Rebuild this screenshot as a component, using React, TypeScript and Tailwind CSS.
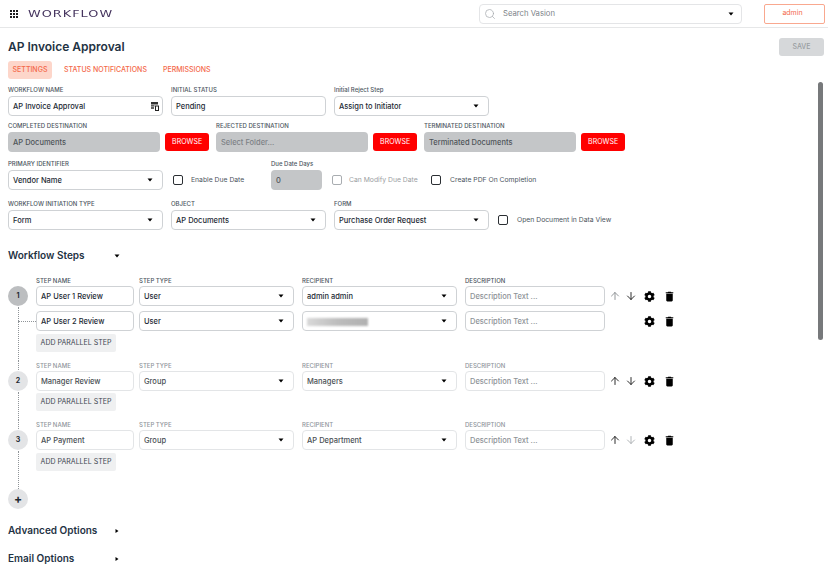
import { ArrowDown, ArrowUp, Search } from "lucide-react";
import { FaCog } from "react-icons/fa";
import { MdDelete } from "react-icons/md";

// ─── Small parts ────────────────────────────────────────────────────────────

function Caret({ right = false }: { right?: boolean }) {
  return (
    <svg width="6" height="6" viewBox="0 0 6 6" className="shrink-0 text-black" aria-hidden="true">
      <path d={right ? "M1.5 1L4.5 3L1.5 5Z" : "M0.5 1.5H5.5L3 4.5Z"} fill="currentColor" />
    </svg>
  );
}

function Label({ children, muted = false }: { children: React.ReactNode; muted?: boolean }) {
  return (
    <div className={`h-[10px] text-[6px] leading-[10px] font-medium whitespace-nowrap ${muted ? "text-[#8f959b]" : "text-[#4b5560]"}`}>
      {children}
    </div>
  );
}

function Box({
  children,
  select = false,
  muted = false,
  className = "",
}: {
  children?: React.ReactNode;
  select?: boolean;
  muted?: boolean;
  className?: string;
}) {
  return (
    <div
      className={`flex h-5 items-center justify-between rounded-[4px] border bg-white pl-[4px] pr-[9px] text-[7.5px] font-medium whitespace-nowrap ${
        muted ? "border-[#e3e5e7] text-[#4a4f55]" : "border-[#cfd2d5] text-[#1d2a35]"
      } ${className}`}
    >
      <span className="flex min-w-0 items-center pt-px">{children}</span>
      {select && <Caret />}
    </div>
  );
}

function Grey({ children, faint = false, w }: { children: string; faint?: boolean; w: string }) {
  return (
    <div
      className={`flex h-5 items-center rounded-[4px] bg-[#c4c6c8] pl-[5px] pt-px text-[7.5px] font-medium ${w} ${
        faint ? "text-[#7d8186]" : "text-[#4f5459]"
      }`}
    >
      {children}
    </div>
  );
}

function Browse() {
  return (
    <button className="ml-[5px] flex h-[18px] w-[44px] items-center justify-center rounded-[3px] bg-[#ff0000] text-[7px] text-white">
      BROWSE
    </button>
  );
}

function Check({ disabled = false }: { disabled?: boolean }) {
  return (
    <div className={`h-[10px] w-[10px] shrink-0 rounded-[2px] ${disabled ? "border border-[#a9adb1]" : "border-[1.5px] border-[#2b2f33]"}`} />
  );
}

function Field({
  label,
  w,
  children,
  className = "",
}: {
  label: string;
  w: string;
  children: React.ReactNode;
  className?: string;
}) {
  return (
    <div className={`${w} ${className}`}>
      <div className="mb-[1px]">
        <Label>{label}</Label>
      </div>
      {children}
    </div>
  );
}

function Section({ title, open = false }: { title: string; open?: boolean }) {
  return (
    <div className="flex items-center">
      <h2 className="w-[106px] text-[10px] font-semibold text-[#1f3344]">{title}</h2>
      <Caret right={!open} />
    </div>
  );
}

function Actions({ upDim = false, downDim = false, arrows = true }: { upDim?: boolean; downDim?: boolean; arrows?: boolean }) {
  return (
    <div className="ml-[4px] flex h-5 items-center text-black">
      <div className="flex w-[35px] items-center">
        {arrows && (
          <>
            <ArrowUp size={12} strokeWidth={1.75} className={`mr-[4px] ${upDim ? "text-[#85898d]" : "text-[#111]"}`} />
            <ArrowDown size={12} strokeWidth={1.75} className={downDim ? "text-[#a5a9ad]" : "text-[#111]"} />
          </>
        )}
      </div>
      <FaCog size={11} />
      <MdDelete size={13} className="ml-[8px]" />
    </div>
  );
}

function StepRow({
  name,
  type,
  recipient,
  muted = false,
  children,
}: {
  name: string;
  type: string;
  recipient: React.ReactNode;
  muted?: boolean;
  children: React.ReactNode;
}) {
  return (
    <div className="flex">
      <Box muted={muted} className="w-[98px]">{name}</Box>
      <Box muted={muted} select className="ml-[5px] w-[155px]">{type}</Box>
      <Box muted={muted} select className="ml-[8px] w-[155px]">{recipient}</Box>
      <Box muted={muted} className="ml-[8px] w-[140px]">
        <span className="text-[#8d9297]">Description Text ...</span>
      </Box>
      {children}
    </div>
  );
}

function StepLabels({ muted = false }: { muted?: boolean }) {
  return (
    <div className="flex">
      <div className="w-[98px]"><Label muted={muted}>STEP NAME</Label></div>
      <div className="ml-[5px] w-[155px]"><Label muted={muted}>STEP TYPE</Label></div>
      <div className="ml-[8px] w-[155px]"><Label muted={muted}>RECIPIENT</Label></div>
      <div className="ml-[8px] w-[140px]"><Label muted={muted}>DESCRIPTION</Label></div>
    </div>
  );
}

function AddParallel() {
  return (
    <button className="flex h-[18px] w-[80px] items-center justify-center rounded-[2px] bg-[#eff0f1] pt-px text-[7px] whitespace-nowrap text-[#3d4650]">
      ADD PARALLEL STEP
    </button>
  );
}

function Step({
  n,
  active = false,
  pb,
  children,
}: {
  n: number;
  active?: boolean;
  pb: string;
  children: React.ReactNode;
}) {
  return (
    <div className="flex">
      <div className="flex w-[20px] flex-col items-center">
        <div className={`mb-px h-[9px] ${n > 1 ? "border-l border-dotted border-[#8f9498]" : ""}`} />
        <div
          className={`flex h-5 w-5 shrink-0 items-center justify-center rounded-full text-[7px] font-bold text-[#1f2a33] ${
            active ? "bg-[#bcbec0]" : "bg-[#e3e4e6]"
          }`}
        >
          {n}
        </div>
        <div className="mt-[1px] flex-1 border-l border-dotted border-[#8f9498]" />
      </div>
      <div className={`ml-[8px] ${pb}`}>{children}</div>
    </div>
  );
}

// ─── Page ───────────────────────────────────────────────────────────────────

export default function App() {
  return (
    <div className="relative h-[573px] w-[828px] overflow-hidden bg-white font-['Inter',sans-serif]">
      {/* top bar */}
      <header className="flex h-[28px] items-center border-b border-[#e6e7e8] pl-[10px]">
        <svg width="8" height="8" viewBox="0 0 8 8" aria-hidden="true">
          {[0, 3, 6].map((y) =>
            [0, 3, 6].map((x) => <rect key={`${x}-${y}`} x={x} y={y} width="2" height="2" fill="#1d1d1f" />),
          )}
        </svg>
        <div className="ml-[10px] w-[85px]">
          <div className="origin-left scale-x-[1.35] text-[9.5px] leading-none tracking-[0.08em] whitespace-nowrap text-[#45345e] font-['DejaVu_Sans',sans-serif]">
            WORKFLOW
          </div>
        </div>
        <div className="ml-[366px] flex h-5 w-[263px] items-center rounded-[4px] border border-[#e4e5e7] pl-[4px] pr-[7px]">
          <Search size={12} strokeWidth={1.5} className="text-[#a8acb0]" />
          <span className="ml-[7px] flex-1 pt-px text-[7.7px] text-[#7d8389]">Search Vasion</span>
          <Caret />
        </div>
        <button className="ml-[22px] h-5 w-[61px] rounded-[2px] border border-[#f9a88f] pr-[4px] text-[7px] text-[#f4694a]">
          admin
        </button>
      </header>

      <main className="px-[8px]">
        <div className="-mr-[4px] flex h-[33px] items-start justify-between pt-[10px]">
          <h1 className="text-[12px] leading-[18px] font-semibold text-[#1f3344]">AP Invoice Approval</h1>
          <button className="h-[18px] w-[45px] rounded-[3px] bg-[#d6d8da] text-[7px] font-medium text-[#9a9ea2]">
            SAVE
          </button>
        </div>

        {/* tabs */}
        <div className="flex h-[18px] items-center text-[7px] font-medium text-[#f4694a]">
          <div className="flex h-[18px] w-[44px] items-center justify-center rounded-[3px] bg-[#fdd6ca] pt-px">SETTINGS</div>
          <div className="ml-[12px] pt-px">STATUS NOTIFICATIONS</div>
          <div className="ml-[16px] pt-px">PERMISSIONS</div>
        </div>

        {/* form */}
        <div className="mt-[6px] flex gap-[8px]">
          <Field label="WORKFLOW NAME" w="w-[155px]">
            <div className="flex h-5 items-center justify-between rounded-[4px] border border-[#cfd2d5] pl-[4px] pr-[3px] text-[7.5px] font-medium text-[#1d2a35]">
              <span className="pt-px">AP Invoice Approval</span>
              <svg width="8" height="9" viewBox="0 0 8 9" aria-hidden="true">
                <path d="M0 0H7V2.5H0ZM0 3.2H3.5V4.6H0ZM0 5.3H3V6.7H0Z" fill="#333" />
                <path d="M4 3.5H8V9H4ZM5 4.6V7.9H7V4.6Z" fill="#222" fillRule="evenodd" />
              </svg>
            </div>
          </Field>
          <Field label="INITIAL STATUS" w="w-[155px]">
            <Box>Pending</Box>
          </Field>
          <Field label="Initial Reject Step" w="w-[155px]">
            <Box select>Assign to Initiator</Box>
          </Field>
        </div>

        <div className="mt-[5px] flex">
          <Field label="COMPLETED DESTINATION" w="w-[201px]">
            <div className="flex items-center">
              <Grey w="w-[153px]">AP Documents</Grey>
              <Browse />
            </div>
          </Field>
          <Field label="REJECTED DESTINATION" w="w-[201px]" className="ml-[7px]">
            <div className="flex items-center">
              <Grey faint w="w-[153px]">Select Folder...</Grey>
              <Browse />
            </div>
          </Field>
          <Field label="TERMINATED DESTINATION" w="w-[201px]" className="ml-[7px]">
            <div className="flex items-center">
              <Grey w="w-[153px]">Terminated Documents</Grey>
              <Browse />
            </div>
          </Field>
        </div>

        <div className="mt-[7px] flex">
          <Field label="PRIMARY IDENTIFIER" w="w-[155px]">
            <Box select>Vendor Name</Box>
          </Field>
          <div className="mt-[11px] ml-[10px] flex h-5 w-[98px] items-center text-[6.8px] text-[#4b5560]">
            <Check />
            <span className="ml-[8px]">Enable Due Date</span>
          </div>
          <Field label="Due Date Days" w="w-[51px]">
            <Grey w="w-[51px]">0</Grey>
          </Field>
          <div className="mt-[11px] ml-[10px] flex h-5 w-[99px] items-center text-[6.8px] text-[#9a9ea2]">
            <Check disabled />
            <span className="ml-[7px] whitespace-nowrap">Can Modify Due Date</span>
          </div>
          <div className="mt-[11px] flex h-5 items-center text-[6.8px] text-[#4b5560]">
            <Check />
            <span className="ml-[9px] whitespace-nowrap">Create PDF On Completion</span>
          </div>
        </div>

        <div className="mt-[9px] flex gap-[8px]">
          <Field label="WORKFLOW INITIATION TYPE" w="w-[155px]">
            <Box select>Form</Box>
          </Field>
          <Field label="OBJECT" w="w-[155px]">
            <Box select>AP Documents</Box>
          </Field>
          <Field label="FORM" w="w-[155px]">
            <Box select>Purchase Order Request</Box>
          </Field>
          <div className="mt-[11px] ml-[1px] flex h-5 items-center text-[6.8px] text-[#4b5560]">
            <Check />
            <span className="ml-[9px] whitespace-nowrap">Open Document in Data View</span>
          </div>
        </div>

        <div className="mt-[18px] h-[14px]">
          <Section title="Workflow Steps" open />
        </div>

        {/* steps */}
        <div className="mt-[14px]">
          <Step n={1} active pb="pb-[9px]">
            <StepLabels />
            <StepRow name="AP User 1 Review" type="User" recipient="admin admin">
              <Actions upDim />
            </StepRow>
            <div className="relative mt-[5px]">
              <div className="absolute top-[10px] -left-[18px] w-[18px] border-t border-dotted border-[#8f9498]" />
              <StepRow
                name="AP User 2 Review"
                type="User"
                recipient={<span className="block h-[8px] w-[61px] bg-gradient-to-r from-[#d9d9d9] via-[#bdbdbd] to-[#b0b0b0] blur-[1px]" />}
              >
                <Actions arrows={false} />
              </StepRow>
            </div>
            <div className="mt-[3px]"><AddParallel /></div>
          </Step>

          <Step n={2} pb="pb-[9px]">
            <StepLabels muted />
            <StepRow muted name="Manager Review" type="Group" recipient="Managers">
              <Actions />
            </StepRow>
            <div className="mt-[2px]"><AddParallel /></div>
          </Step>

          <Step n={3} pb="pb-[18px]">
            <StepLabels muted />
            <StepRow muted name="AP Payment" type="Group" recipient="AP Department">
              <Actions downDim />
            </StepRow>
            <div className="mt-[3px]"><AddParallel /></div>
          </Step>

          <div className="flex h-5 w-5 items-center justify-center rounded-full bg-[#e3e4e6] text-[12px] font-bold text-[#1f2a33]">
            +
          </div>
        </div>

        <div className="mt-[14px] h-[14px]">
          <Section title="Advanced Options" />
        </div>
        <div className="mt-[14px] h-[14px]">
          <Section title="Email Options" />
        </div>
      </main>

      {/* scrollbar thumb */}
      <div className="absolute top-[82px] left-[818px] h-[258px] w-[5px] rounded-full bg-[#77797b]" />
    </div>
  );
}
